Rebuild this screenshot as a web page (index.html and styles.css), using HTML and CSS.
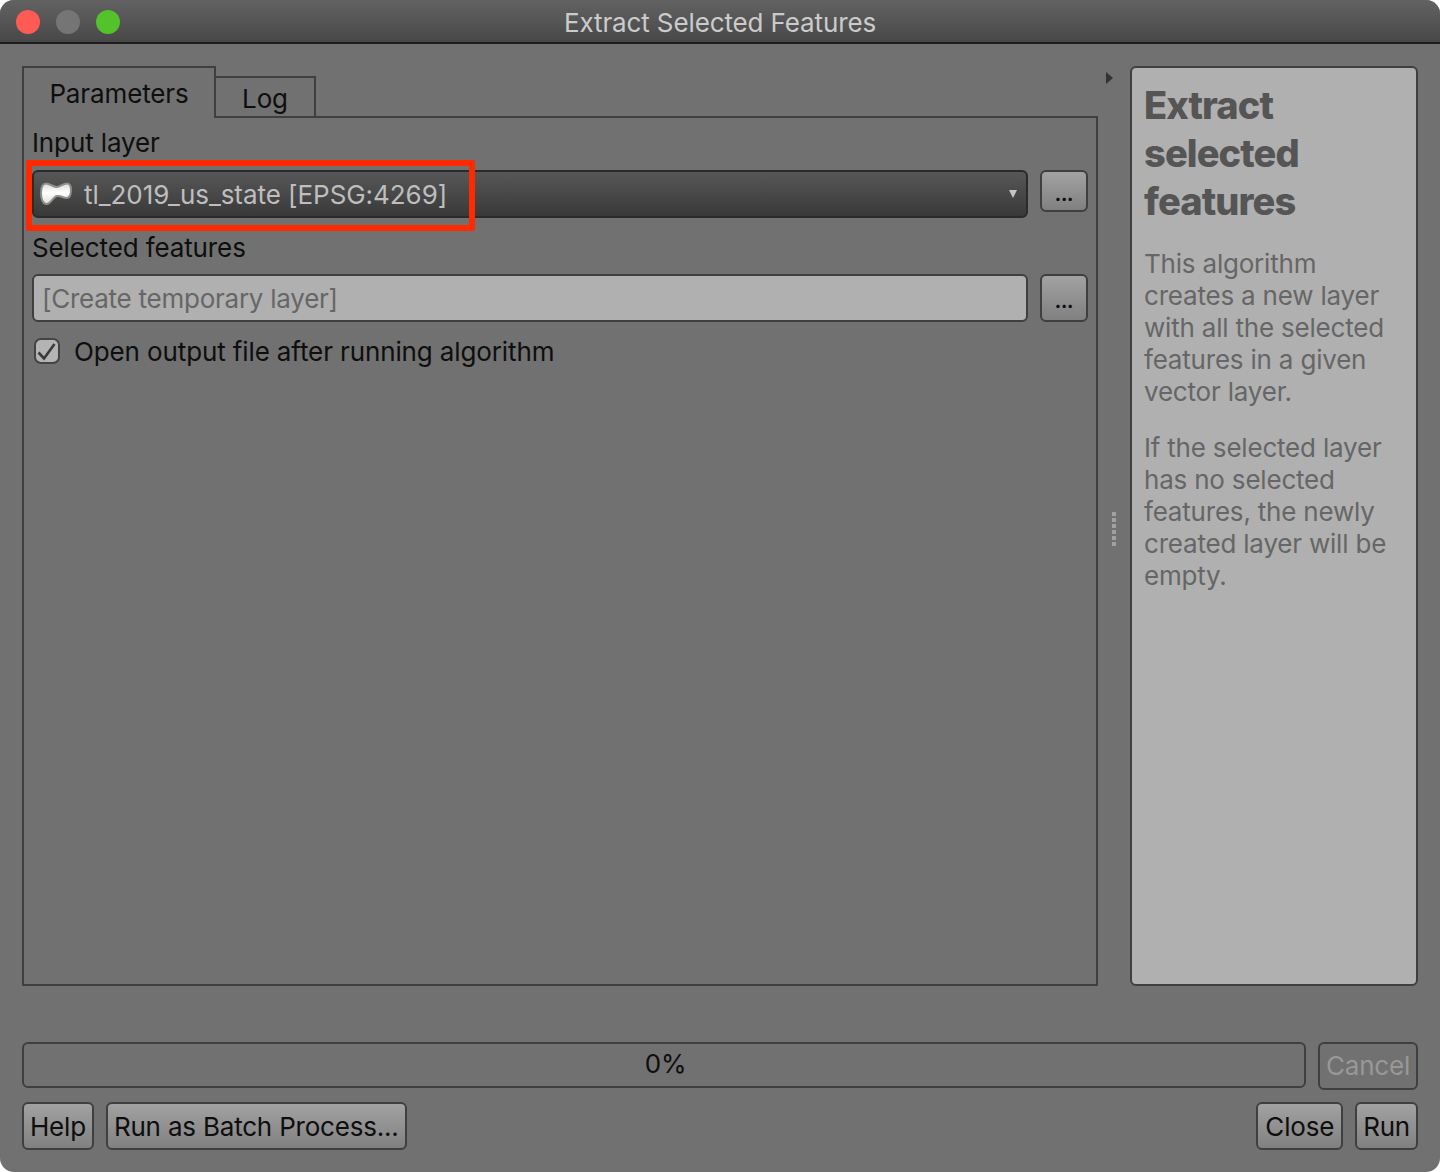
FILE: index.html
```html
<!DOCTYPE html>
<html lang="en">
<head>
  <meta charset="UTF-8" />
  <meta name="viewport" content="width=device-width, initial-scale=1.0" />
  <title>Extract Selected Features</title>
  <link rel="stylesheet" href="styles.css">
</head>
<body>
  <div class="window">
    <header class="titlebar">
      <div class="lights">
        <span class="light light-close"></span>
        <span class="light light-min"></span>
        <span class="light light-max"></span>
      </div>
      <div class="window-title">Extract Selected Features</div>
    </header>

    <main class="content">
      <section class="main-row">
        <div class="left-col">
          <div class="tabs">
            <div class="tab tab-active">Parameters</div>
            <div class="tab tab-log">Log</div>
          </div>
          <div class="tab-panel">
            <div class="field-label field-label-first">Input layer</div>
            <div class="field-row">
              <div class="combo">
                <svg class="layer-icon" width="32" height="26" viewBox="0 0 32 26">
                  <defs>
                    <linearGradient id="layerFill" x1="0" y1="0" x2="0" y2="1">
                      <stop offset="0" stop-color="#dcdcdc"/>
                      <stop offset="0.45" stop-color="#ffffff"/>
                      <stop offset="1" stop-color="#e0e0e0"/>
                    </linearGradient>
                  </defs>
                  <path d="M6 2.500C10 2.500 13 6 17 6C20 6 23 2.500 27 2.500C30 2.500 31 5 31 9C31 13 30 17 26.500 17C23 17 21 14.500 17 15C13 15.500 11 23 6.500 23C2.500 23 1 17 1 12C1 6 2.500 2.500 6 2.500Z" fill="url(#layerFill)" stroke="#8f8f88" stroke-width="2"/>
                </svg>
                <span class="combo-text">tl_2019_us_state [EPSG:4269]</span>
                <span class="combo-arrow"></span>
              </div>
              <button class="btn btn-dots btn-short">...</button>
              <div class="highlight"></div>
            </div>
            <div class="field-label">Selected features</div>
            <div class="field-row">
              <div class="text-input">[Create temporary layer]</div>
              <button class="btn btn-dots">...</button>
            </div>
            <div class="check-row">
              <svg class="checkbox" width="28" height="28" viewBox="0 0 28 28">
                <rect x="2" y="2" width="24" height="24" rx="6" fill="#b4b4b4" stroke="#444" stroke-width="2"/>
                <path d="M5.500 15.500L11 21.500L21.500 7" fill="none" stroke="#3a3a3a" stroke-width="2.600"/>
              </svg>
              <span>Open output file after running algorithm</span>
            </div>
          </div>
        </div>

        <div class="splitter">
          <span class="collapse-arrow"></span>
          <span class="grip"></span>
        </div>

        <aside class="help-panel">
          <h1>Extract selected features</h1>
          <p>This algorithm creates a new layer with all the selected features in a given vector layer.</p>
          <p>If the selected layer has no selected features, the newly created layer will be empty.</p>
        </aside>
      </section>

      <section class="progress-row">
        <div class="progress">0%</div>
        <button class="btn btn-cancel">Cancel</button>
      </section>

      <section class="button-row">
        <button class="btn">Help</button>
        <button class="btn">Run as Batch Process...</button>
        <span class="spacer"></span>
        <button class="btn btn-close">Close</button>
        <button class="btn">Run</button>
      </section>
    </main>
  </div>
</body>
</html>
```

FILE: styles.css
```css
:root {
  --window-bg: #717171;
  --line: #3f3f3f;
  --text: #0e0e0e;
}

* {
  box-sizing: border-box;
}

body {
  margin: 0;
  background-color: #fff;
  font-family: Inter, "Liberation Sans", sans-serif;
  font-size: 26px;
  letter-spacing: -0.12px;
  color: var(--text);
}

.window {
  display: flex;
  flex-direction: column;
  height: 1172px;
  background-color: var(--window-bg);
  border-radius: 14px;
  overflow: hidden;
}

.titlebar {
  position: relative;
  display: flex;
  align-items: center;
  justify-content: center;
  flex: none;
  height: 44px;
  background: linear-gradient(#626262, #484848);
  border-bottom: 2px solid #1d1d1d;
}

.lights {
  position: absolute;
  top: 10px;
  left: 16px;
  display: flex;
  gap: 16px;
}

.light {
  width: 24px;
  height: 24px;
  border-radius: 50%;
}

.light-close { background-color: #fd5b54; }
.light-min { background-color: #757575; }
.light-max { background-color: #53c22b; }

.window-title {
  padding-top: 4px;
  color: #cbcbcb;
  line-height: 44px;
}

.content {
  display: flex;
  flex-direction: column;
  flex: 1;
  padding: 22px;
}

.main-row {
  display: flex;
  height: 920px;
}

.left-col {
  display: flex;
  flex-direction: column;
  width: 1076px;
}

.tabs {
  display: flex;
  align-items: flex-end;
  flex: none;
  height: 52px;
  margin-bottom: -2px;
}

.tab {
  display: flex;
  align-items: center;
  justify-content: center;
  border: 2px solid var(--line);
  border-bottom: 0;
}

.tab-active {
  position: relative;
  z-index: 1;
  width: 194px;
  height: 52px;
  background-color: var(--window-bg);
}

.tab-log {
  width: 100px;
  height: 42px;
  border-left: 0;
}

.tab-panel {
  flex: 1;
  padding: 9px 8px 0;
  border: 2px solid var(--line);
}

.field-label {
  height: 32px;
  margin: 13px 0 11px;
  line-height: 33px;
}

.field-label-first {
  margin: 0 0 11px;
  line-height: 32px;
}

.field-row {
  position: relative;
  display: flex;
  gap: 12px;
}

.combo {
  display: flex;
  align-items: center;
  flex: 1;
  height: 48px;
  padding: 0 9px 0 6px;
  background: linear-gradient(#575757, #393939);
  border: 2px solid #2b2b2b;
  border-radius: 6px;
}

.layer-icon {
  flex: none;
  margin-right: 12px;
}

.combo-text {
  flex: 1;
  color: #bebebe;
  letter-spacing: -0.05px;
}

.combo-arrow {
  width: 0;
  height: 0;
  border-left: 4px solid transparent;
  border-right: 4px solid transparent;
  border-top: 8px solid #c6c6c6;
}

.highlight {
  position: absolute;
  top: -10px;
  left: -6px;
  width: 449px;
  height: 71px;
  border: 6px solid #ff2a00;
  border-radius: 2px;
}

.text-input {
  flex: 1;
  height: 48px;
  padding: 0 8px;
  background-color: #b0b0b0;
  border: 2px solid var(--line);
  border-radius: 6px;
  color: #666;
  letter-spacing: -0.25px;
  line-height: 46px;
}

.btn {
  height: 48px;
  padding: 0 6px;
  background: linear-gradient(#a2a2a2, #808080);
  border: 2px solid var(--line);
  border-radius: 6px;
  color: var(--text);
  font-family: inherit;
  font-size: 26px;
  letter-spacing: -0.2px;
}

.btn-dots {
  flex: none;
  width: 48px;
  padding: 0;
  font-size: 18px;
  font-weight: 800;
  line-height: 52px;
}

.btn-short {
  height: 42px;
  line-height: 46px;
}

.btn-close {
  padding: 0 7px;
}

.check-row {
  display: flex;
  align-items: center;
  gap: 13px;
  height: 32px;
  margin-top: 14px;
  margin-left: 1px;
  line-height: 30px;
}

.checkbox {
  flex: none;
  margin-top: -2px;
}

.splitter {
  position: relative;
  display: flex;
  align-items: center;
  justify-content: center;
  width: 32px;
}

.collapse-arrow {
  position: absolute;
  top: 6px;
  left: 8px;
  width: 0;
  height: 0;
  border-top: 6px solid transparent;
  border-bottom: 6px solid transparent;
  border-left: 7px solid #333;
}

.grip {
  width: 4px;
  height: 34px;
  margin-top: 6px;
  background: repeating-linear-gradient(#a0a0a0 0 4px, transparent 4px 6px);
}

.help-panel {
  width: 288px;
  padding: 13px 12px;
  background-color: #b0b0b0;
  border: 2px solid var(--line);
  border-radius: 6px;
  color: #666;
  letter-spacing: -0.2px;
  line-height: 32px;
}

.help-panel h1 {
  margin: 0 0 23px;
  color: #555;
  font-size: 38px;
  font-weight: 800;
  letter-spacing: -0.9px;
  line-height: 48px;
}

.help-panel p {
  margin: 0 0 24px;
}

.progress-row {
  display: flex;
  align-items: flex-start;
  gap: 12px;
  margin-top: 56px;
}

.progress {
  flex: 1;
  height: 46px;
  padding-left: 3px;
  border: 2px solid var(--line);
  border-radius: 6px;
  line-height: 40px;
  text-align: center;
}

.btn-cancel {
  width: 100px;
  padding: 0 0 2px;
  background: var(--window-bg);
  color: #989898;
}

.button-row {
  display: flex;
  gap: 12px;
  margin-top: 12px;
}

.spacer {
  flex: 1;
}
```
